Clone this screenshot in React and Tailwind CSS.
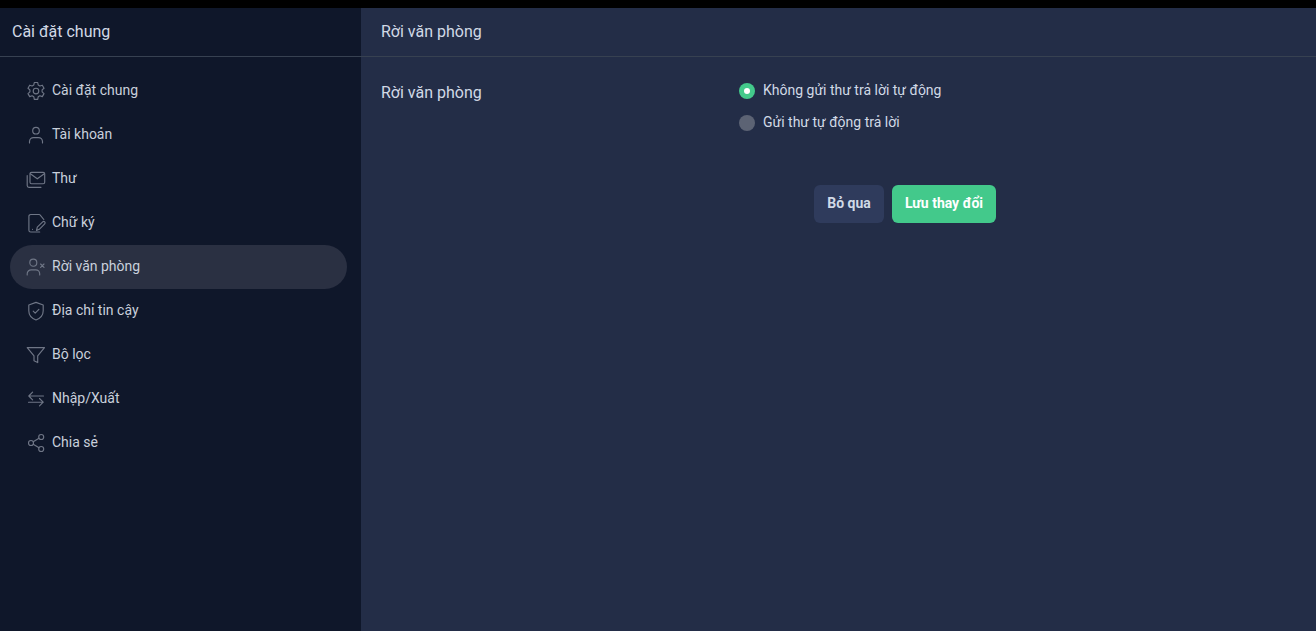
const S = ({ children }) => (
  <svg width="20" height="20" viewBox="0 0 20 20" fill="none" stroke="#6f7686" strokeWidth="1.15" strokeLinecap="round" strokeLinejoin="round" className="shrink-0">
    {children}
  </svg>
);

const items = [
  { label: "Cài đặt chung", icon: <><path d="M8.300 1.500h3.400l.5 2.500 1.700 1 2.400-.8 1.700 3-1.900 1.700v2l1.900 1.700-1.700 3-2.400-.8-1.700 1-.5 2.500H8.300l-.5-2.500-1.700-1-2.400.8-1.700-3 1.900-1.700v-2L2 7.200l1.700-3 2.400.8 1.700-1z" /><circle cx="10" cy="10" r="2.800" /></> },
  { label: "Tài khoản", icon: <><circle cx="10" cy="5.700" r="3.300" /><path d="M3.500 18v-1.500a4 4 0 0 1 4-3.900h5a4 4 0 0 1 4 3.900V18" /></> },
  { label: "Thư", icon: <><rect x="4" y="3.300" width="14.700" height="11.400" rx="1.500" /><path d="M4.300 4.800l7 5 7-5" /><path d="M1.200 6.500v10a1.800 1.800 0 0 0 1.800 1.800h12" /></> },
  { label: "Chữ ký", icon: <><path d="M17.800 6.500L14 1.800a1 1 0 0 0-.8-.3H4.700A1.800 1.800 0 0 0 2.900 3.300v13.900A1.800 1.800 0 0 0 4.700 19h9" /><path d="M10.500 17.500l.8-3.300 5.400-5.400a1.400 1.400 0 0 1 2 2L13.300 16.300z" /><path d="M6.500 16.300h.01" /></> },
  { label: "Rời văn phòng", active: true, icon: <><circle cx="7.300" cy="5.700" r="3.500" /><path d="M1.200 18v-1.200a4 4 0 0 1 4-4h4.500a4 4 0 0 1 4 4V18" /><path d="M14.600 7l3.400 3.400M18 7l-3.400 3.400" /></> },
  { label: "Địa chỉ tin cậy", icon: <><path d="M10 1.400l7.200 2.600v5.800c0 4.300-3 7.600-7.200 9.200-4.200-1.600-7.200-4.900-7.200-9.200V4z" /><path d="M7.200 10.200l2 2 3.700-3.800" /></> },
  { label: "Bộ lọc", icon: <path d="M1.200 2.600h17.300l-6.800 8.200v6.800l-3.700-1.800v-5z" /> },
  { label: "Nhập/Xuất", icon: <><path d="M2.800 7h14.700M6.600 3.200L2.800 7l3.800 3.800" /><path d="M2.500 13.200h14.700M13.500 9.500l3.700 3.700-3.700 3.700" /></> },
  { label: "Chia sẻ", icon: <><circle cx="15.200" cy="4" r="2.500" /><circle cx="5" cy="10" r="2.500" /><circle cx="15.200" cy="16" r="2.500" /><path d="M13 5.300L7.200 8.700M7.200 11.300l5.800 3.400" /></> },
];

export default function App() {
  return (
    <div className="h-[631px] w-[1316px] overflow-hidden bg-black pt-2 font-['Roboto',sans-serif]">
      <div className="flex h-[623px]">
        <aside className="w-[361px] shrink-0 bg-[#0f172a]">
          <div className="flex h-[49px] items-center border-b border-[#374151] pl-3 text-base text-[#d1d9e6]">Cài đặt chung</div>
          <nav className="flex flex-col pt-3 pl-[10px] pr-[14px]">
            {items.map((it) => (
              <div key={it.label} className={`flex h-11 items-center gap-[6px] rounded-full pl-4 ${it.active ? "bg-[#2a3042]" : ""}`}>
                <S>{it.icon}</S>
                <span className="-translate-y-[1px] text-sm font-normal text-[#c9d0dc]">{it.label}</span>
              </div>
            ))}
          </nav>
        </aside>
        <main className="flex-1 bg-[#232d47]">
          <div className="flex h-[49px] items-center border-b border-[#374151] pl-5 text-base text-[#d1d9e6]">Rời văn phòng</div>
          <div className="flex pl-5 pt-[23px]">
            <div className="w-[358px] shrink-0 pt-[1px] text-base text-[#d1d9e6]">Rời văn phòng</div>
            <div className="flex flex-col">
              <div className="flex h-5 items-center gap-2">
                <span className="flex h-4 w-4 translate-y-[1px] items-center justify-center rounded-full bg-[#43c98b]">
                  <span className="h-[6px] w-[6px] rounded-full bg-white" />
                </span>
                <span className="text-sm text-[#d1d9e6]">Không gửi thư trả lời tự động</span>
              </div>
              <div className="mt-3 flex h-5 items-center gap-2">
                <span className="h-4 w-4 translate-y-[1px] rounded-full bg-[#5c6374]" />
                <span className="text-sm text-[#d1d9e6]">Gửi thư tự động trả lời</span>
              </div>
            </div>
          </div>
          <div className="mt-[53px] flex gap-2 pl-[453px]">
            <button className="h-[38px] w-[70px] rounded-md bg-[#2f3b5c] pb-[2px] text-sm font-bold text-[#d1d9e6]">Bỏ qua</button>
            <button className="h-[38px] w-[104px] rounded-md bg-[#43c98b] pb-[2px] text-sm font-bold text-white">Lưu thay đổi</button>
          </div>
        </main>
      </div>
    </div>
  );
}
